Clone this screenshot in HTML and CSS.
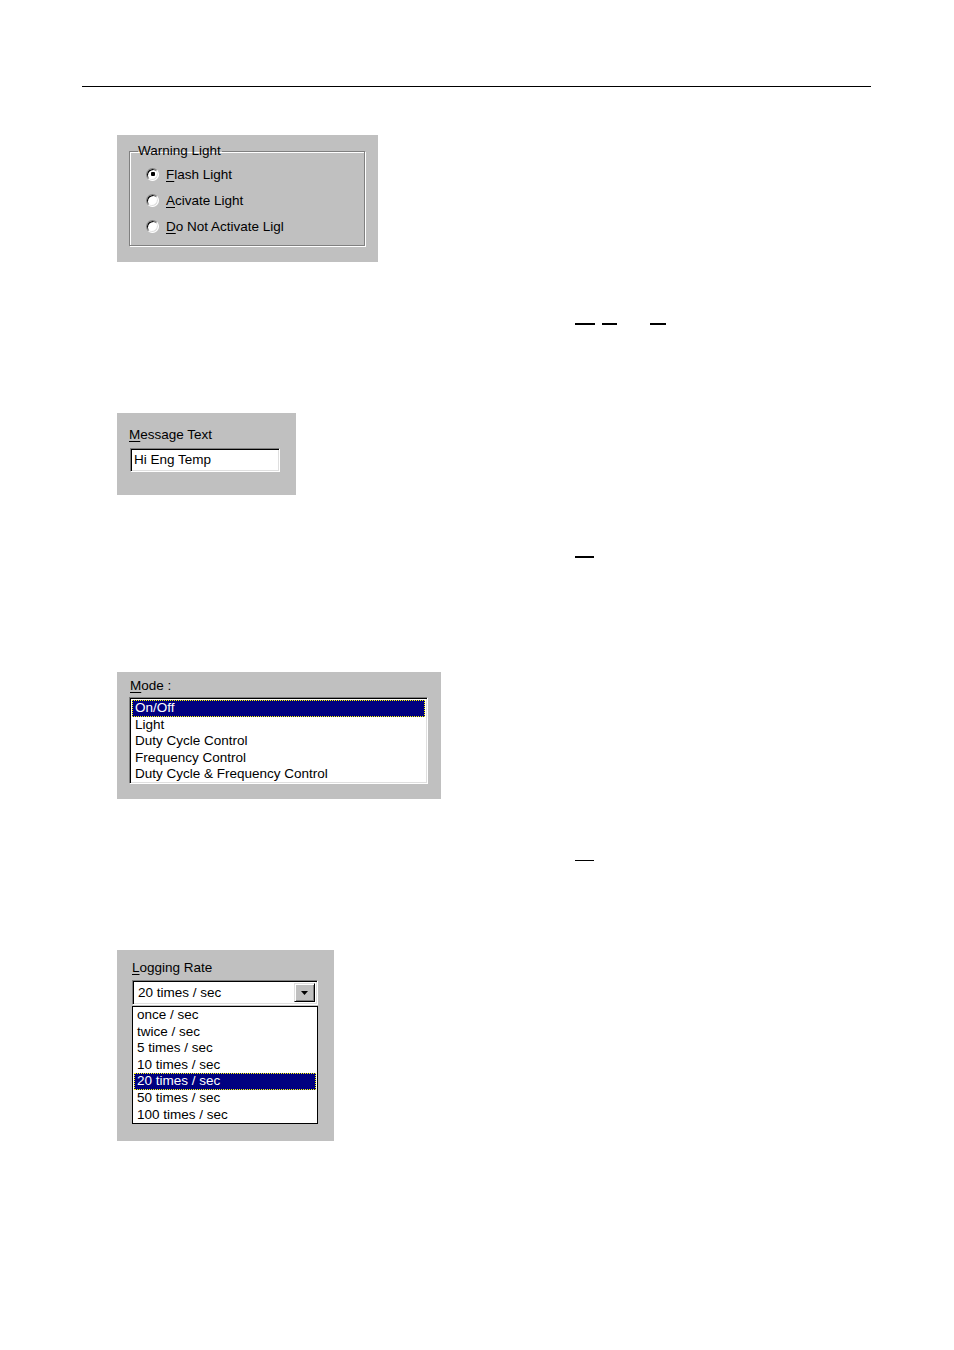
FILE: index.html
```html
<!DOCTYPE html>
<html>
<head>
<meta charset="utf-8">
<link rel="stylesheet" href="styles.css">
</head>
<body>
<div class="page">
  <div class="rule"></div>

  <div class="panel p1">
    <fieldset class="group">
      <legend class="legend">Warning Light</legend>
      <div class="opt"><span class="radio checked"></span><span><u>F</u>lash Light</span></div>
      <div class="opt"><span class="radio"></span><span><u>A</u>civate Light</span></div>
      <div class="opt"><span class="radio"></span><span><u>D</u>o Not Activate Ligl</span></div>
    </fieldset>
  </div>

  <div class="marks m1"><span class="dash d1"></span><span class="dash d2"></span><span class="dash d3"></span></div>

  <div class="panel p2">
    <div class="label"><u>M</u>essage Text</div>
    <div class="edit">Hi Eng Temp</div>
  </div>

  <div class="marks m2"><span class="dash d4"></span></div>

  <div class="panel p3">
    <div class="label lab3"><u>M</u>ode :</div>
    <div class="listbox">
      <div class="row sel">On/Off</div>
      <div class="row">Light</div>
      <div class="row">Duty Cycle Control</div>
      <div class="row">Frequency Control</div>
      <div class="row">Duty Cycle &amp; Frequency Control</div>
    </div>
  </div>

  <div class="marks m3"><span class="dash d5"></span></div>

  <div class="panel p4">
    <div class="label lab4"><u>L</u>ogging Rate</div>
    <div class="combo">
      <span class="combo-text">20 times / sec</span>
      <span class="combo-btn"><svg width="7" height="4" viewBox="0 0 7 4"><path d="M0 0H7L3.5 4Z" fill="#000"/></svg></span>
    </div>
    <div class="droplist">
      <div class="drow">once / sec</div>
      <div class="drow">twice / sec</div>
      <div class="drow">5 times / sec</div>
      <div class="drow">10 times / sec</div>
      <div class="drow sel">20 times / sec</div>
      <div class="drow">50 times / sec</div>
      <div class="drow">100 times / sec</div>
    </div>
  </div>
</div>
</body>
</html>
```

FILE: styles.css
```css
html, body {
  margin: 0;
  padding: 0;
  background: #fff;
}
body {
  font-family: "Liberation Sans", Arial, sans-serif;
  font-size: 13.5px;
  color: #000;
}
.page {
  padding-top: 86px;
  padding-bottom: 200px;
}
.rule {
  margin-left: 82px;
  width: 789px;
  border-top: 1px solid #000;
}
.panel {
  margin-left: 117px;
  background: #c0c0c0;
  box-sizing: border-box;
}
u { text-decoration: underline; text-underline-offset: 2px; }

/* Panel 1 */
.p1 {
  margin-top: 48px;
  width: 261px;
  height: 127px;
  padding: 8px 0 0 12px;
}
.group {
  margin: 0;
  width: 236px;
  box-sizing: border-box;
  padding: 2px 0 6px 16px;
  border: 1px solid #808080;
  box-shadow: 1px 1px 0 #fff, inset 1px 1px 0 #fff;
}
.legend {
  padding: 0 1px 0 0;
  margin-left: -8px;
  line-height: 16px;
}
.opt {
  display: flex;
  align-items: center;
  height: 26px;
  gap: 7px;
}
.radio {
  width: 13px;
  height: 13px;
  box-sizing: border-box;
  border-radius: 50%;
  background: #fff;
  border: 1px solid;
  border-color: #808080 #fff #fff #808080;
  box-shadow: inset 1px 1px 0 #000, inset -1px -1px 0 #dfdfdf;
  display: flex;
  align-items: center;
  justify-content: center;
  flex: none;
}
.radio.checked::after {
  content: "";
  width: 4px;
  height: 4px;
  background: #000;
  border-radius: 1px;
}

/* marks */
.marks {
  display: flex;
  margin-left: 575px;
}
.dash { display: block; background: #000; }
.m1 { margin-top: 61px; gap: 7px; }
.d1 { width: 20px; height: 2px; }
.d2 { width: 15px; height: 2px; }
.d3 { width: 16px; height: 2px; margin-left: 26px; }
.m2 { margin-top: 61px; }
.d4 { width: 19px; height: 2px; }
.m3 { margin-top: 61px; }
.d5 { width: 19px; height: 1px; }

/* Panel 2 */
.p2 {
  margin-top: 88px;
  width: 179px;
  height: 82px;
  padding: 14px 0 0 12px;
}
.label {
  line-height: 16px;
  height: 16px;
  white-space: nowrap;
}
.edit {
  margin: 5px 0 0 1px;
  width: 150px;
  height: 24px;
  box-sizing: border-box;
  background: #fff;
  border: 1px solid;
  border-color: #808080 #fff #fff #808080;
  box-shadow: inset 1px 1px 0 #000, inset -1px -1px 0 #dfdfdf;
  padding: 0 0 0 3px;
  line-height: 22px;
  white-space: nowrap;
}

/* Panel 3 */
.p3 {
  margin-top: 114px;
  width: 324px;
  height: 127px;
  padding: 6px 0 0 12px;
}
.lab3 { margin-left: 1px; }
.listbox {
  margin-top: 3px;
  width: 299px;
  height: 87px;
  box-sizing: border-box;
  background: #fff;
  border: 1px solid;
  border-color: #808080 #fff #fff #808080;
  box-shadow: inset 1px 1px 0 #000, inset -1px -1px 0 #dfdfdf;
  padding: 2px 2px 0 2px;
}
.row {
  height: 16.6px;
  line-height: 16.6px;
  padding-left: 3px;
  white-space: nowrap;
  box-sizing: border-box;
}
.row.sel, .drow.sel {
  background: #000080;
  color: #fff;
  outline: 1px dotted #ffff00;
  outline-offset: -1px;
}

/* Panel 4 */
.p4 {
  margin-top: 89px;
  width: 217px;
  height: 191px;
  padding: 10px 0 0 15px;
}
.combo {
  margin-top: 4px;
  width: 186px;
  height: 25px;
  box-sizing: border-box;
  background: #fff;
  border: 1px solid;
  border-color: #808080 #fff #fff #808080;
  box-shadow: inset 1px 1px 0 #000, inset -1px -1px 0 #dfdfdf;
  display: flex;
  align-items: center;
  justify-content: space-between;
  padding: 2px 2px 2px 5px;
}
.combo-text { white-space: nowrap; }
.combo-btn {
  width: 21px;
  height: 19px;
  box-sizing: border-box;
  background: #c0c0c0;
  border: 1px solid;
  border-color: #dfdfdf #000 #000 #dfdfdf;
  box-shadow: inset 1px 1px 0 #fff, inset -1px -1px 0 #808080;
  display: flex;
  align-items: center;
  justify-content: center;
}
.droplist {
  margin-top: 1px;
  width: 186px;
  height: 118px;
  box-sizing: border-box;
  background: #fff;
  border: 1px solid #000;
  padding: 0 1px;
}
.drow {
  height: 16.6px;
  line-height: 16.6px;
  padding-left: 3px;
  white-space: nowrap;
}
```
